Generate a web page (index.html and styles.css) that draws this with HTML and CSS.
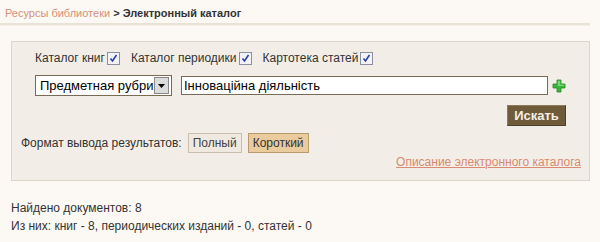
FILE: index.html
```html
<!DOCTYPE html>
<html lang="ru">
<head>
<meta charset="utf-8">
<link rel="stylesheet" href="styles.css">
</head>
<body>
<div class="crumbs"><a class="crumb-link" href="#">Ресурсы библиотеки</a> <b>&gt; Электронный каталог</b></div>
<div class="sep"></div>
<div class="panel">
  <div class="checks">
    <label class="chk">Каталог книг <span class="cb"><svg viewBox="0 0 11 11" width="11" height="11"><path d="M2.5 5.5 L4.5 8 L8.5 2" fill="none" stroke="#2a3fa8" stroke-width="1.6"/></svg></span></label>
    <label class="chk">Каталог периодики <span class="cb"><svg viewBox="0 0 11 11" width="11" height="11"><path d="M2.5 5.5 L4.5 8 L8.5 2" fill="none" stroke="#2a3fa8" stroke-width="1.6"/></svg></span></label>
    <label class="chk">Картотека статей <span class="cb"><svg viewBox="0 0 11 11" width="11" height="11"><path d="M2.5 5.5 L4.5 8 L8.5 2" fill="none" stroke="#2a3fa8" stroke-width="1.6"/></svg></span></label>
  </div>
  <div class="query">
    <div class="select"><span class="sel-text">Предметная рубри</span><span class="sel-btn"><svg viewBox="0 0 7 4" width="7" height="4"><path d="M0 0 H7 L3.5 4 Z" fill="#000"/></svg></span></div>
    <div class="input">Інноваційна діяльність</div>
    <span class="plus"><svg viewBox="0 0 14 14" width="14" height="14"><path d="M5 1 H9 V5 H13 V9 H9 V13 H5 V9 H1 V5 H5 Z" fill="#3bb33b" stroke="#1f8a1f" stroke-width="0.8"/><path d="M5.8 1.8 H8.2 V5.8 H12.2 V7 H5.8 Z" fill="#7ad67a"/></svg></span>
  </div>
  <div class="actions"><span class="btn-search">Искать</span></div>
  <div class="format">
    <span class="format-label">Формат вывода результатов:</span>
    <span class="fbtn">Полный</span>
    <span class="fbtn fbtn-on">Короткий</span>
  </div>
  <div class="desc"><a href="#" class="desc-link">Описание электронного каталога</a></div>
</div>
<div class="results">
  <div>Найдено документов: 8</div>
  <div>Из них: книг - 8, периодических изданий - 0, статей - 0</div>
</div>
</body>
</html>
```
FILE: styles.css
```css
html, body {
  margin: 0;
  padding: 0;
  background: #fcf9f4;
  font-family: "Liberation Sans", Arial, sans-serif;
  color: #333;
  width: 600px;
  height: 242px;
  overflow: hidden;
}
.crumbs {
  font-size: 11px;
  padding: 7px 0 0 5px;
  height: 15px;
  color: #333;
}
.crumb-link {
  color: #d5907a;
  text-decoration: none;
}
.sep {
  margin: 1px 10px 0 0;
  height: 2px;
  background: #e9e2d6;
  border-bottom: 1px solid #f3eee6;
}
.panel {
  margin: 15px 10px 0 11px;
  background: #f2eee7;
  border: 1px solid #dcd5ca;
  height: 140px;
  box-sizing: border-box;
  padding: 9px 0 0 23px;
  font-size: 12px;
}
.checks {
  display: flex;
  gap: 11px;
  height: 14px;
  align-items: center;
}
.chk {
  display: flex;
  align-items: center;
  gap: 2px;
  color: #333;
}
.cb {
  width: 11px;
  height: 11px;
  border: 1px solid #8b8f9f;
  background: #f3f3f7;
  display: inline-flex;
}
.query {
  display: flex;
  align-items: center;
  margin-top: 10px;
  height: 21px;
}
.select {
  width: 137px;
  height: 21px;
  border: 1px solid #7a6a55;
  background: #fff;
  box-sizing: border-box;
  display: flex;
  align-items: center;
  overflow: hidden;
  font-size: 13px;
  color: #000;
}
.sel-text {
  flex: 1;
  padding-left: 4px;
  white-space: nowrap;
  overflow: hidden;
}
.sel-btn {
  width: 13px;
  height: 15px;
  background: #dcdcdc;
  border: 1px solid #888;
  display: flex;
  align-items: center;
  justify-content: center;
  margin-right: 2px;
}
.input {
  margin-left: 9px;
  width: 367px;
  height: 19px;
  border: 1px solid #7a6a55;
  background: #fff;
  box-sizing: border-box;
  font-size: 13px;
  color: #000;
  padding-left: 2px;
  line-height: 17px;
}
.plus {
  margin-left: 4px;
  display: inline-flex;
}
.actions {
  display: flex;
  justify-content: flex-end;
  margin-top: 9px;
  padding-right: 23px;
  height: 21px;
}
.btn-search {
  background: #6f5a3a;
  color: #f4efe4;
  font-weight: bold;
  font-size: 13px;
  width: 59px;
  height: 21px;
  line-height: 20px;
  text-align: center;
  border: 1px solid #4e3f28;
  border-top-color: #8f7a58;
  border-left-color: #8f7a58;
  box-sizing: border-box;
}
.format {
  display: flex;
  align-items: center;
  gap: 6px;
  margin-top: 7px;
  margin-left: -14px;
  height: 20px;
}
.fbtn {
  padding: 0 4px;
  height: 20px;
  line-height: 18px;
  box-sizing: border-box;
  border: 1px solid #c9bfae;
  background: #efe9e0;
  color: #444;
}
.fbtn-on {
  background: #e9cb9d;
  border-color: #b79a6e;
  color: #333;
}
.desc {
  text-align: right;
  margin-top: 2px;
  line-height: 14px;
  padding-right: 8px;
}
.desc-link {
  color: #d98a72;
  text-decoration: underline;
}
.results {
  margin: 18px 0 0 11px;
  font-size: 12px;
  line-height: 18px;
  color: #333;
}
```
